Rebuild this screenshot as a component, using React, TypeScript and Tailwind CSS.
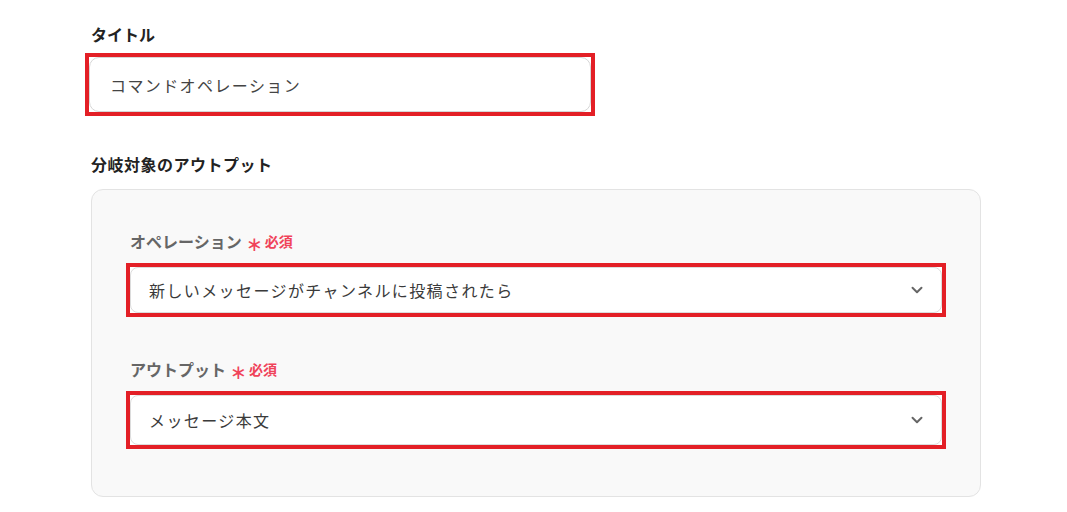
import { ChevronDown } from "lucide-react";

const font = { fontFamily: '"Noto Sans CJK JP", "Noto Sans", sans-serif' };

interface LabelProps {
    text: string;
}

const RequiredLabel = ({ text }: LabelProps) => {
    return (
        <div className="flex items-center h-6 text-base font-bold text-[#666]">
            <span>{text}</span>
            <span className="ml-[4px] text-[20px] leading-none text-[#f0435a] font-normal mt-[4px]">∗</span>
            <span className="ml-[2px] text-[14px] text-[#f0435a]">必須</span>
        </div>
    );
};

interface SelectProps {
    value: string;
    height: string;
}

const Select = ({ value, height }: SelectProps) => {
    return (
        <div className={`-ml-[4px] w-[820px] ${height} border-4 border-[#e31f26] bg-white`}>
            <div className="flex h-full items-center justify-between rounded-[8px] border border-[#dcdcdc] pl-[18px] pr-[15px] text-base tracking-[1.4px] text-[#3a3a3a]">
                <span>{value}</span>
                <ChevronDown size={18} strokeWidth={2.6} className="text-[#666]" />
            </div>
        </div>
    );
};

export default function App() {
    return (
        <div style={font} className="w-[1067px] h-[512px] bg-white pl-[91px] pt-[22px]">
            <div className="h-6 text-base font-bold text-[#222]">タイトル</div>
            <div className="mt-[7px] -ml-[6px] w-[510px] h-[63px] border-4 border-[#e31f26] bg-white">
                <div className="flex h-full items-center rounded-[10px] border border-[#d6d6d6] pl-[20px] text-base tracking-[1.4px] text-[#444]">
                    コマンドオペレーション
                </div>
            </div>
            <div className="mt-[36px] h-6 text-base font-bold text-[#222] tracking-[0.5px]">分岐対象のアウトプット</div>
            <div className="mt-[13px] w-[890px] h-[308px] rounded-xl border border-[#e3e3e3] bg-[#f9f9f9] pl-[38px] pt-[39px]">
                <RequiredLabel text="オペレーション" />
                <div className="mt-[10px]">
                    <Select value="新しいメッセージがチャンネルに投稿されたら" height="h-[54px]" />
                </div>
                <div className="mt-[40px]">
                    <RequiredLabel text="アウトプット" />
                </div>
                <div className="mt-[10px]">
                    <Select value="メッセージ本文" height="h-[58px]" />
                </div>
            </div>
        </div>
    );
}
